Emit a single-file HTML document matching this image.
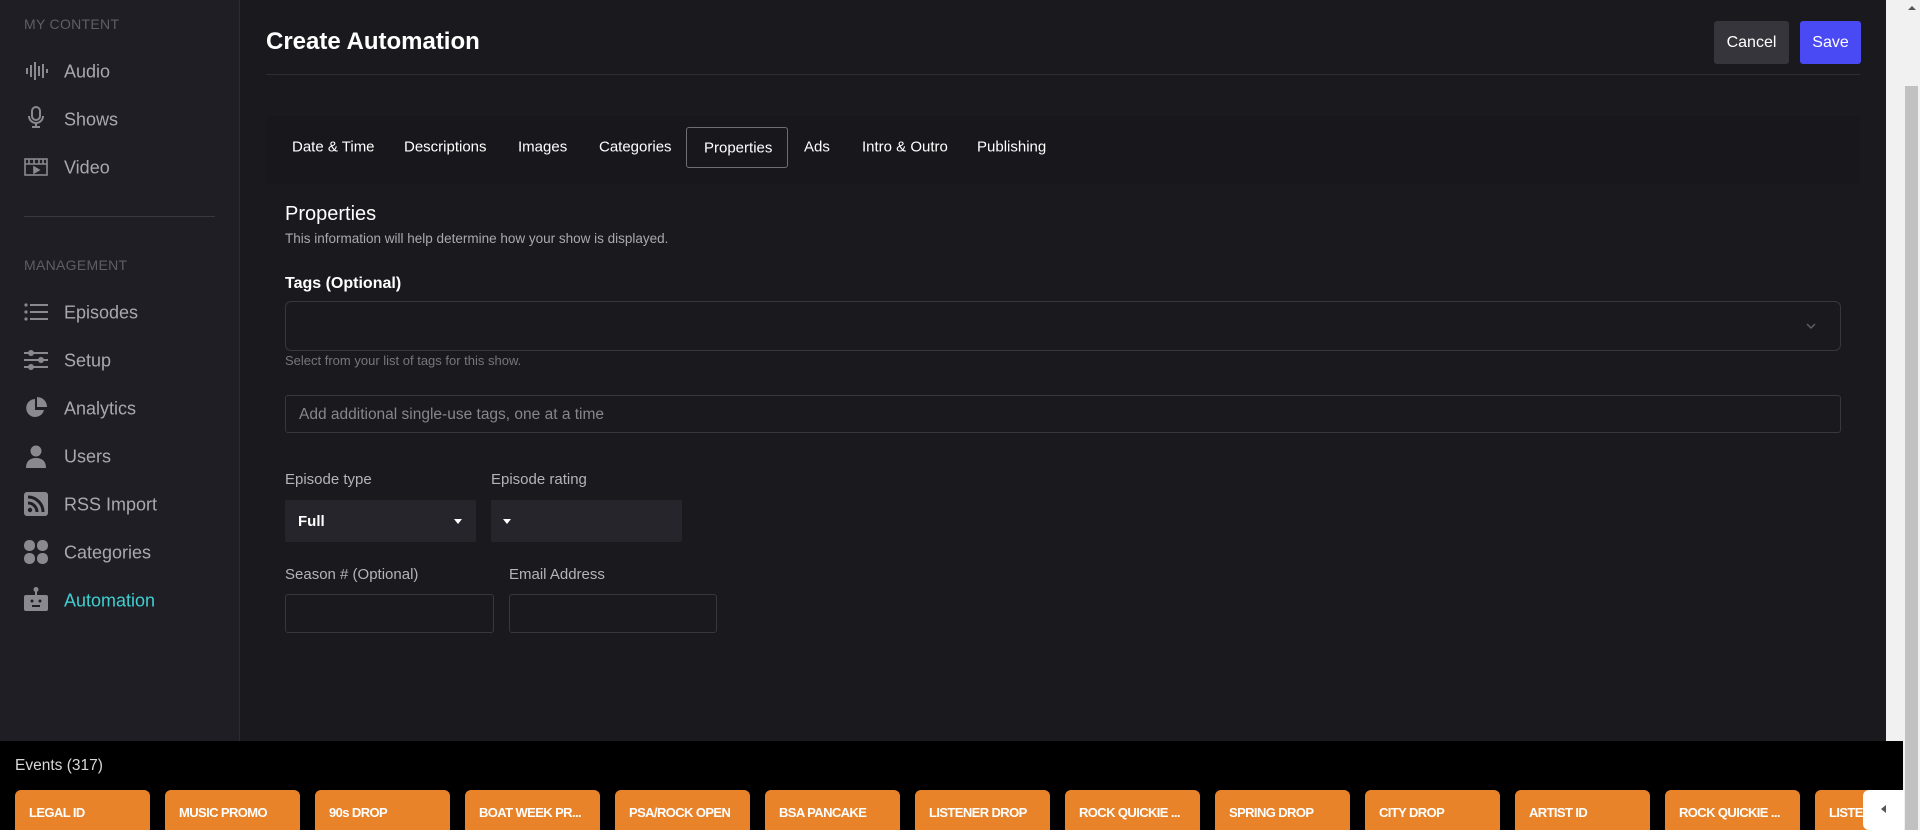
<!DOCTYPE html>
<html><head><meta charset="utf-8"><style>
*{box-sizing:border-box;margin:0;padding:0}
body{width:1920px;height:830px;overflow:hidden;background:#1a191e;font-family:"Liberation Sans",sans-serif;position:relative;color:#fff}
.a{position:absolute}
#sb{left:0;top:0;width:240px;height:741px;background:#1f1e24;border-right:1px solid #2c2b31}
.sec{left:24px;font-size:14px;color:#5f5e64;letter-spacing:.3px}
.it{left:64px;font-size:18px;color:#a9a8ae;transform:translateY(-50%)}
.ic{left:24px;width:24px;height:24px;transform:translateY(-50%)}
.tab{font-size:15px;color:#fff;top:147px;transform:translateY(-50%)}
.card{top:790px;width:135px;height:45px;background:#e8832a;border-radius:6px;color:#fff;font-weight:bold;font-size:13px;letter-spacing:-.6px;padding:15px 0 0 14px;white-space:nowrap;overflow:hidden}
.lbl{font-size:15px;color:#b4b3b8}
</style></head><body>
<div id="sb" class="a"></div>
<div class="a sec" style="top:16px">MY CONTENT</div>
<svg class="a ic" style="top:71px" viewBox="0 0 24 24" fill="#8a898f"><rect x="2" y="9" width="2" height="6"/><rect x="6" y="6" width="2" height="12"/><rect x="10" y="3" width="2" height="18"/><rect x="14" y="7" width="2" height="10"/><rect x="18" y="5" width="2" height="14"/><rect x="22" y="10" width="2" height="4"/></svg>
<div class="a it" style="top:72px">Audio</div>
<svg class="a ic" style="top:117px" viewBox="0 0 24 24" fill="none" stroke="#8a898f" stroke-width="2"><rect x="8" y="2" width="8" height="13" rx="4"/><path d="M5 11a7 7 0 0 0 14 0M12 18v4M8 22h8"/></svg>
<div class="a it" style="top:120px">Shows</div>
<svg class="a ic" style="top:167px" viewBox="0 0 24 24" fill="none" stroke="#8a898f" stroke-width="1.6"><rect x="1" y="4" width="22" height="16"/><path d="M1 9h22M5 4v5M10 4v5M15 4v5M19 4v5"/><path d="M10 12l5 3-5 3z" fill="#8a898f"/></svg>
<div class="a it" style="top:168px">Video</div>
<div class="a" style="left:24px;top:216px;width:191px;height:1px;background:#38373d"></div>
<div class="a sec" style="top:257px">MANAGEMENT</div>
<svg class="a ic" style="top:312px" viewBox="0 0 24 24" fill="#8a898f"><circle cx="2" cy="5" r="1.6"/><circle cx="2" cy="12" r="1.6"/><circle cx="2" cy="19" r="1.6"/><rect x="6" y="4" width="18" height="2"/><rect x="6" y="11" width="18" height="2"/><rect x="6" y="18" width="18" height="2"/></svg>
<div class="a it" style="top:313px">Episodes</div>
<svg class="a ic" style="top:360px" viewBox="0 0 24 24" fill="#8a898f"><rect x="0" y="4" width="24" height="2"/><rect x="0" y="11" width="24" height="2"/><rect x="0" y="18" width="24" height="2"/><circle cx="7" cy="5" r="3"/><circle cx="17" cy="12" r="3"/><circle cx="7" cy="19" r="3"/></svg>
<div class="a it" style="top:361px">Setup</div>
<svg class="a ic" style="top:408px" viewBox="0 0 24 24" fill="#8a898f"><path d="M11 3a9 9 0 1 0 9 11h-9z"/><path d="M13 1v10h10A10 10 0 0 0 13 1z"/></svg>
<div class="a it" style="top:409px">Analytics</div>
<svg class="a ic" style="top:456px" viewBox="0 0 24 24" fill="#8a898f"><circle cx="12" cy="7" r="5.5"/><path d="M2 24c0-7 4-10 10-10s10 3 10 10z"/></svg>
<div class="a it" style="top:457px">Users</div>
<svg class="a ic" style="top:504px" viewBox="0 0 24 24"><rect x="0" y="0" width="24" height="24" rx="3" fill="#8a898f"/><circle cx="6" cy="18" r="2.2" fill="#1f1e24"/><path d="M4 11a9 9 0 0 1 9 9M4 5a15 15 0 0 1 15 15" stroke="#1f1e24" stroke-width="3" fill="none"/></svg>
<div class="a it" style="top:505px">RSS Import</div>
<svg class="a ic" style="top:552px" viewBox="0 0 24 24" fill="#8a898f"><rect x="0" y="0" width="11" height="11" rx="5"/><rect x="13" y="0" width="11" height="11" rx="5"/><rect x="0" y="13" width="11" height="11" rx="5"/><rect x="13" y="13" width="11" height="11" rx="5"/></svg>
<div class="a it" style="top:553px">Categories</div>
<svg class="a ic" style="top:599px" viewBox="0 0 24 24" fill="#8a898f"><circle cx="12" cy="2.5" r="2.5"/><rect x="11" y="3" width="2" height="5"/><rect x="0" y="8" width="24" height="16" rx="2"/><circle cx="8" cy="14" r="1.5" fill="#1f1e24"/><circle cx="16" cy="14" r="1.5" fill="#1f1e24"/><rect x="8" y="18" width="8" height="2" fill="#1f1e24"/></svg>
<div class="a it" style="top:601px;color:#3fcfd0">Automation</div>

<div class="a" style="left:266px;top:28px;font-size:24px;font-weight:bold">Create Automation</div>
<div class="a" style="left:1714px;top:21px;width:75px;height:43px;background:#36353b;border-radius:3px;font-size:16px;text-align:center;line-height:43px">Cancel</div>
<div class="a" style="left:1800px;top:21px;width:61px;height:43px;background:#4a4af4;border-radius:3px;font-size:16px;text-align:center;line-height:43px">Save</div>
<div class="a" style="left:266px;top:74px;width:1594px;height:1px;background:#2e2d33"></div>
<div class="a" style="left:266px;top:116px;width:1594px;height:68px;background:#18171c"></div>
<div class="a tab" style="left:292px">Date &amp; Time</div>
<div class="a tab" style="left:404px">Descriptions</div>
<div class="a tab" style="left:518px">Images</div>
<div class="a tab" style="left:599px">Categories</div>
<div class="a" style="left:686px;top:127px;width:102px;height:41px;border:1px solid #6f6e74;border-radius:3px"></div>
<div class="a tab" style="left:704px;top:148px">Properties</div>
<div class="a tab" style="left:804px">Ads</div>
<div class="a tab" style="left:862px">Intro &amp; Outro</div>
<div class="a tab" style="left:977px">Publishing</div>

<div class="a" style="left:285px;top:203px;font-size:20px">Properties</div>
<div class="a" style="left:285px;top:231px;font-size:13.5px;color:#aaa9ae">This information will help determine how your show is displayed.</div>
<div class="a" style="left:285px;top:275px;font-size:16px;font-weight:bold">Tags (Optional)</div>
<div class="a" style="left:285px;top:301px;width:1556px;height:50px;border:1px solid #38373d;border-radius:6px"></div>
<svg class="a" style="left:1805px;top:320px" width="12" height="12" viewBox="0 0 12 12"><path d="M2 4l4 4 4-4" stroke="#5f5e64" stroke-width="1.5" fill="none"/></svg>
<div class="a" style="left:285px;top:353px;font-size:13px;color:#77767b">Select from your list of tags for this show.</div>
<div class="a" style="left:285px;top:395px;width:1556px;height:38px;border:1px solid #38373d;border-radius:3px;font-size:15.5px;color:#87868b;padding:10px 0 0 13px">Add additional single-use tags, one at a time</div>

<div class="a lbl" style="left:285px;top:471px">Episode type</div>
<div class="a lbl" style="left:491px;top:471px">Episode rating</div>
<div class="a" style="left:285px;top:500px;width:191px;height:42px;background:#26252b;border-radius:2px;font-size:15px;font-weight:bold;padding:13px 0 0 13px">Full</div>
<div class="a" style="left:454px;top:519px;border:4px solid transparent;border-top:5px solid #fff;border-bottom:0"></div>
<div class="a" style="left:491px;top:500px;width:191px;height:42px;background:#26252b;border-radius:2px"></div>
<div class="a" style="left:503px;top:519px;border:4px solid transparent;border-top:5px solid #fff;border-bottom:0"></div>
<div class="a lbl" style="left:285px;top:566px">Season # (Optional)</div>
<div class="a lbl" style="left:509px;top:566px">Email Address</div>
<div class="a" style="left:285px;top:594px;width:209px;height:39px;border:1px solid #38373d;border-radius:3px"></div>
<div class="a" style="left:509px;top:594px;width:208px;height:39px;border:1px solid #38373d;border-radius:3px"></div>

<div class="a" style="left:1886px;top:0;width:34px;height:830px;background:#f1f1f1"></div>
<div class="a" style="left:1905px;top:86px;width:13px;height:744px;background:#c1c1c1"></div>
<div class="a" style="left:1908px;top:6px;border:4px solid transparent;border-bottom:4px solid #555;border-top:0"></div>

<div class="a" style="left:0;top:741px;width:1903px;height:89px;background:#000;overflow:hidden">
<div class="a" style="left:15px;top:16px;font-size:15.5px;color:#d8d8d8">Events (317)</div>
</div>
<div class="a" style="left:0;top:741px;width:1903px;height:89px;overflow:hidden">
<div class="a card" style="left:15px;top:49px">LEGAL ID</div>
<div class="a card" style="left:165px;top:49px">MUSIC PROMO</div>
<div class="a card" style="left:315px;top:49px">90s DROP</div>
<div class="a card" style="left:465px;top:49px">BOAT WEEK PR...</div>
<div class="a card" style="left:615px;top:49px">PSA/ROCK OPEN</div>
<div class="a card" style="left:765px;top:49px">BSA PANCAKE</div>
<div class="a card" style="left:915px;top:49px">LISTENER DROP</div>
<div class="a card" style="left:1065px;top:49px">ROCK QUICKIE ...</div>
<div class="a card" style="left:1215px;top:49px">SPRING DROP</div>
<div class="a card" style="left:1365px;top:49px">CITY DROP</div>
<div class="a card" style="left:1515px;top:49px">ARTIST ID</div>
<div class="a card" style="left:1665px;top:49px">ROCK QUICKIE ...</div>
<div class="a card" style="left:1815px;top:49px">LISTENER DROP</div>
</div>
<div class="a" style="left:1863px;top:790px;width:41px;height:40px;background:#fff;border-radius:6px 0 0 6px"></div>
<div class="a" style="left:1881px;top:805px;border:4px solid transparent;border-right:5px solid #555;border-left:0"></div>
</body></html>
